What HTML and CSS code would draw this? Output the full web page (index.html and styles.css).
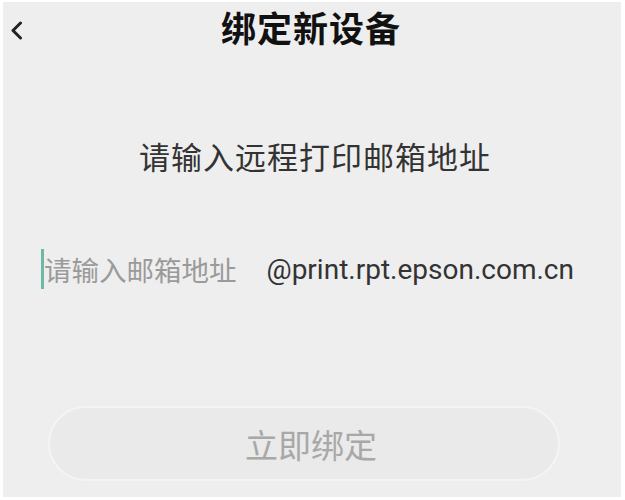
FILE: index.html
```html
<!DOCTYPE html>
<html lang="zh-CN">
<head>
<meta charset="utf-8">
<title>绑定新设备</title>
<link rel="stylesheet" href="styles.css">
</head>
<body>
<div class="screen">
  <header class="topbar">
    <span class="back" aria-label="返回">
      <svg width="15" height="19" viewBox="0 0 15 19"><path d="M11.5 2 L4 9.5 L11.5 17" fill="none" stroke="#222" stroke-width="3" stroke-linecap="round" stroke-linejoin="round"/></svg>
    </span>
    <h1 class="title">绑定新设备</h1>
  </header>
  <p class="prompt">请输入远程打印邮箱地址</p>
  <div class="field">
    <span class="caret"></span>
    <span class="placeholder">请输入邮箱地址</span>
    <span class="domain">@print.rpt.epson.com.cn</span>
  </div>
  <div class="action">
    <button class="bind">立即绑定</button>
  </div>
</div>
</body>
</html>
```
FILE: styles.css
```css
html, body {
  margin: 0;
  padding: 0;
  background: #ffffff;
}
body {
  width: 625px;
  height: 500px;
  padding: 2px 4px 3px 3px;
  box-sizing: border-box;
  font-family: "Noto Sans CJK SC", "Noto Sans", sans-serif;
}
.screen {
  height: 100%;
  background: #eeeeee;
  display: flex;
  flex-direction: column;
}
.topbar {
  position: relative;
  height: 48px;
  display: flex;
  align-items: center;
  justify-content: center;
}
.back {
  position: absolute;
  left: 6px;
  top: 19px;
  display: flex;
}
.title {
  margin: 0;
  font-size: 35px;
  font-weight: 700;
  color: #111;
  letter-spacing: 1px;
  line-height: 1;
  margin-left: -2px;
}
.prompt {
  margin: 86px 0 0;
  text-align: center;
  font-size: 31px;
  line-height: 40px;
  color: #333;
  letter-spacing: 1px;
  padding-left: 6px;
}
.field {
  margin-top: 71px;
  display: flex;
  align-items: center;
  padding-left: 38px;
  height: 44px;
}
.caret {
  width: 3px;
  height: 40px;
  background: #6fb8a8;
}
.placeholder {
  font-size: 27.5px;
  color: #9a9a9a;
}
.domain {
  margin-left: 30px;
  font-family: Roboto, "Liberation Sans", sans-serif;
  font-size: 28px;
  color: #333;
}
.action {
  margin-top: 115px;
  padding-left: 45px;
}
.bind {
  width: 512px;
  height: 75px;
  border-radius: 38px;
  border: 2px solid #f4f4f4;
  background: #eaeaea;
  color: #a8a8a8;
  font-family: "Noto Sans CJK SC", sans-serif;
  font-size: 33px;
  padding: 0 0 0 14px;
  display: flex;
  align-items: center;
  justify-content: center;
}
```
